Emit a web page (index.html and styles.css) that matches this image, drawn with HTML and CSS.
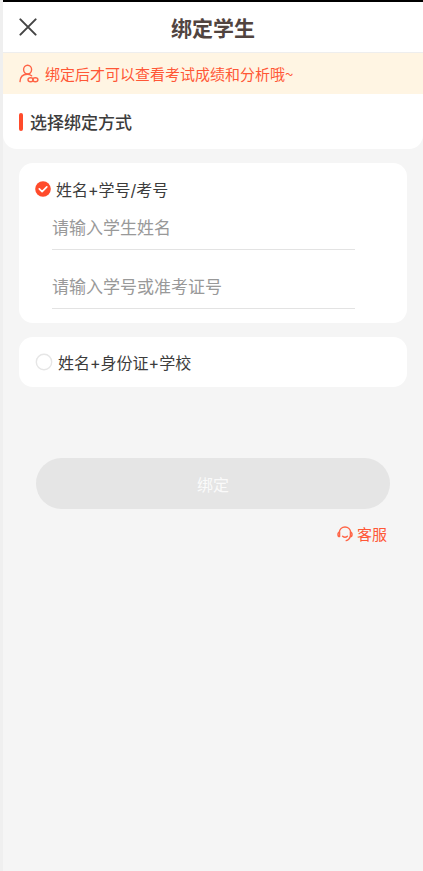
FILE: index.html
```html
<!DOCTYPE html>
<html lang="zh-CN">
<head>
<meta charset="utf-8">
<meta name="viewport" content="width=device-width, initial-scale=1">
<title>绑定学生</title>
<link rel="stylesheet" href="styles.css">
</head>
<body>
<header class="header">
  <button class="close" type="button" aria-label="关闭">
    <svg width="18" height="18" viewBox="0 0 18 18" fill="none" stroke="#444" stroke-width="2" stroke-linecap="round"><path d="M1.4 1.4 16.6 16.6M16.6 1.4 1.4 16.6"/></svg>
  </button>
  <h1 class="title">绑定学生</h1>
</header>
<main>
  <p class="notice">
    <svg width="20" height="20" viewBox="0 0 20 20" fill="none" stroke="#ff6446" stroke-width="1.4" stroke-linecap="round"><ellipse cx="8.6" cy="5.6" rx="4" ry="4.4"/><path d="M1 17.6C1.2 13 3.6 10.3 8.2 10.2 10 10.2 11.4 10.8 12.6 11.8"/><ellipse cx="11.6" cy="15.8" rx="2.6" ry="2"/><ellipse cx="16.3" cy="15.8" rx="2.6" ry="2"/></svg>
    <span>绑定后才可以查看考试成绩和分析哦~</span>
  </p>
  <div class="section">
    <h2 class="section-title">选择绑定方式</h2>
  </div>
  <form class="form">
    <section class="card">
      <label class="option">
        <input class="radio" type="radio" name="method" checked>
        <svg class="tick" width="16" height="16" viewBox="0 0 16 16" fill="none"><circle cx="8" cy="8" r="7.8" fill="#ff4b2b"/><path d="M4.3 7.9 7.1 10.6 11.8 5.9" stroke="#fff" stroke-width="1.7" stroke-linecap="round" stroke-linejoin="round"/></svg>
        <span class="option-text">姓名+学号/考号</span>
      </label>
      <div class="fields">
        <input class="field" type="text" placeholder="请输入学生姓名" aria-label="学生姓名">
        <input class="field" type="text" placeholder="请输入学号或准考证号" aria-label="学号或准考证号">
      </div>
    </section>
    <section class="card card-small">
      <label class="option">
        <input class="radio" type="radio" name="method">
        <svg class="tick" width="18" height="18" viewBox="0 0 18 18" fill="none"><circle cx="9" cy="9" r="7.7" stroke="#e6e6e6" stroke-width="1.4"/></svg>
        <span class="option-text">姓名+身份证+学校</span>
      </label>
    </section>
    <button class="submit" type="button">绑定</button>
    <a class="service" href="#">
      <svg width="16" height="16" viewBox="0 0 16 16" fill="none" stroke="#ff6446" stroke-width="1.4" stroke-linecap="round" stroke-linejoin="round"><path d="M2.3 6.5C2.5 3.2 5 1 8 1s5.5 2.2 5.7 5.5"/><path d="M2.6 6.3C.4 6.2.4 10.6 2.6 10.6ZM13.4 6.3c2.2-.1 2.2 4.3 0 4.3Z"/><path d="M13.2 10.8C12.6 12.8 11.2 14.2 9.2 14.6M5.6 10.2C7 11.4 9 11.4 10.4 10.2"/></svg>
      <span>客服</span>
    </a>
  </form>
</main>
</body>
</html>
```
FILE: styles.css
```css
* {
  box-sizing: border-box;
}

body {
  margin: 0;
  min-height: 100vh;
  border-left: 3px solid #efefef;
  background: #f5f5f5;
  color: #3c3c3c;
  font-family: "Noto Sans CJK SC", sans-serif;
}

button,
input {
  font: inherit;
}

.header {
  display: grid;
  grid-template-columns: 50px 1fr 50px;
  align-items: center;
  height: 53px;
  border-top: 2px solid #000;
  border-bottom: 1px solid #eee;
  background: #fff;
}

.close {
  display: flex;
  justify-content: center;
  padding: 0;
  border: 0;
  background: none;
}

.title {
  margin: 0;
  color: #51443f;
  font-size: 21px;
  font-weight: 700;
  line-height: 32px;
  text-align: center;
}

.notice {
  display: flex;
  align-items: center;
  gap: 6px;
  height: 41px;
  margin: 0;
  padding: 0 16px;
  background: #fff5e3;
  color: #ff5736;
  font-size: 15px;
}

.section {
  display: flex;
  align-items: center;
  height: 55px;
  padding: 0 16px;
  border-radius: 0 0 14px 14px;
  background: #fff;
}

.section-title {
  display: flex;
  align-items: center;
  gap: 7px;
  margin: 0;
  font-size: 17px;
  font-weight: 500;
  line-height: 24px;
}

.section-title::before {
  content: "";
  width: 4px;
  height: 18px;
  border-radius: 2px;
  background: #ff4b2b;
}

.form {
  display: flex;
  flex-direction: column;
  gap: 14px;
  padding: 14px 16px;
}

.card {
  padding: 14px 16px;
  border-radius: 14px;
  background: #fff;
}

.card-small {
  padding: 13px 16px;
}

.option {
  display: flex;
  align-items: center;
  gap: 5px;
  height: 24px;
}

.option-text {
  padding-top: 2px;
  font-family: Inter, "Noto Sans CJK SC", sans-serif;
  font-size: 16px;
  line-height: 24px;
}

.radio {
  position: absolute;
  opacity: 0;
}

.tick {
  flex: none;
}

.fields {
  display: grid;
  gap: 10px;
  padding: 0 36px 0 17px;
}

.field {
  width: 100%;
  height: 49px;
  padding: 2px 0 0;
  border: 0;
  border-bottom: 1px solid #e3e3e3;
  border-radius: 0;
  outline: 0;
  background: none;
  font-size: 17px;
}

.field::placeholder {
  color: #999;
  opacity: 1;
}

.submit {
  height: 51px;
  margin: 57px 17px 0;
  border: 0;
  border-radius: 26px;
  background: #e5e5e5;
  color: #fafafa;
  font-size: 16px;
}

.service {
  display: flex;
  align-items: center;
  align-self: flex-end;
  gap: 4px;
  margin-right: 20px;
  color: #ff5736;
  font-size: 15px;
  line-height: 22px;
  text-decoration: none;
}
```
